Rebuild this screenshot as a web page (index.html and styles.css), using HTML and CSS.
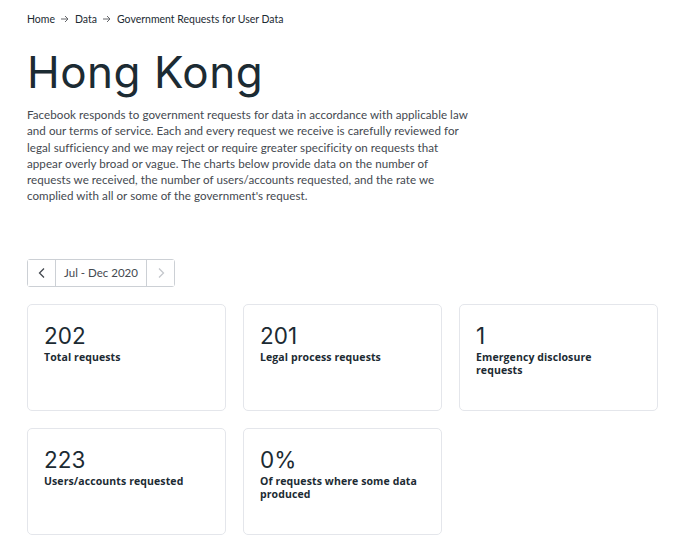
FILE: index.html
```html
<!DOCTYPE html>
<html>
<head>
<meta charset="utf-8">
<link rel="stylesheet" href="styles.css">
</head>
<body>
<main class="page">
  <nav class="crumbs">
    <span>Home</span>
    <svg class="arrow" width="10" height="10" viewBox="0 0 10 10"><path d="M1 5h7M5 2l3 3-3 3" fill="none" stroke="#65676b" stroke-width="1"/></svg>
    <span>Data</span>
    <svg class="arrow" width="10" height="10" viewBox="0 0 10 10"><path d="M1 5h7M5 2l3 3-3 3" fill="none" stroke="#65676b" stroke-width="1"/></svg>
    <span>Government Requests for User Data</span>
  </nav>
  <h1 class="title">Hong Kong</h1>
  <p class="intro">Facebook responds to government requests for data in accordance with applicable law<br>and our terms of service. Each and every request we receive is carefully reviewed for<br>legal sufficiency and we may reject or require greater specificity on requests that<br>appear overly broad or vague. The charts below provide data on the number of<br>requests we received, the number of users/accounts requested, and the rate we<br>complied with all or some of the government's request.</p>
  <div class="picker">
    <button class="pbtn"><svg width="10" height="12" viewBox="0 0 10 12"><path d="M7 1.5L2.5 6 7 10.5" fill="none" stroke="#444950" stroke-width="1.3"/></svg></button>
    <div class="plabel">Jul - Dec 2020</div>
    <button class="pbtn"><svg width="10" height="12" viewBox="0 0 10 12"><path d="M3 1.5L7.5 6 3 10.5" fill="none" stroke="#c4c7cc" stroke-width="1.3"/></svg></button>
  </div>
  <section class="cards">
    <div class="card"><div class="num">202</div><div class="lbl">Total requests</div></div>
    <div class="card"><div class="num">201</div><div class="lbl">Legal process requests</div></div>
    <div class="card"><div class="num">1</div><div class="lbl">Emergency disclosure<br>requests</div></div>
    <div class="card"><div class="num">223</div><div class="lbl">Users/accounts requested</div></div>
    <div class="card"><div class="num">0%</div><div class="lbl">Of requests where some data<br>produced</div></div>
  </section>
</main>
</body>
</html>
```
FILE: styles.css
```css
html, body { margin: 0; padding: 0; background: #fff; }
body { font-family: "Lato", "Liberation Sans", sans-serif; color: #1c2b33; }
.page { padding: 11px 0 0 27px; width: 631px; }
.crumbs { display: flex; align-items: center; gap: 5px; font-size: 10.5px; color: #1c2b33; height: 16px; }
.arrow { margin: 0; }
.title { font-family: "Inter", sans-serif; font-weight: 400; font-size: 44px; line-height: 52px; margin: 19px 0 9px 0; letter-spacing: 0.5px; color: #1c2b33; }
.intro { font-size: 11.6px; line-height: 16.3px; color: #444950; margin: 0; width: 470px; letter-spacing: 0.05px; white-space: nowrap; }
.picker { display: inline-flex; margin-top: 54px; border: 1px solid #ccd0d5; border-radius: 3px; height: 26px; }
.pbtn { width: 27px; border: 0; background: #fff; display: flex; align-items: center; justify-content: center; padding: 0; }
.plabel { border-left: 1px solid #ccd0d5; border-right: 1px solid #ccd0d5; width: 90px; display: flex; align-items: center; justify-content: center; font-size: 11.5px; color: #444950; }
.cards { display: grid; grid-template-columns: repeat(3, 199px); gap: 17px 17px; margin-top: 17px; }
.card { border: 1px solid #e4e6eb; border-radius: 5px; padding: 17px 16px 0 16px; box-sizing: border-box; height: 107px; }
.num { font-family: "Inter", sans-serif; font-size: 22.5px; line-height: 28px; color: #1c2b33; }
.lbl { font-family: "Open Sans", sans-serif; font-size: 10.5px; font-weight: 700; line-height: 13px; color: #1c2b33; margin-top: 1px; letter-spacing: 0.1px; }
```
